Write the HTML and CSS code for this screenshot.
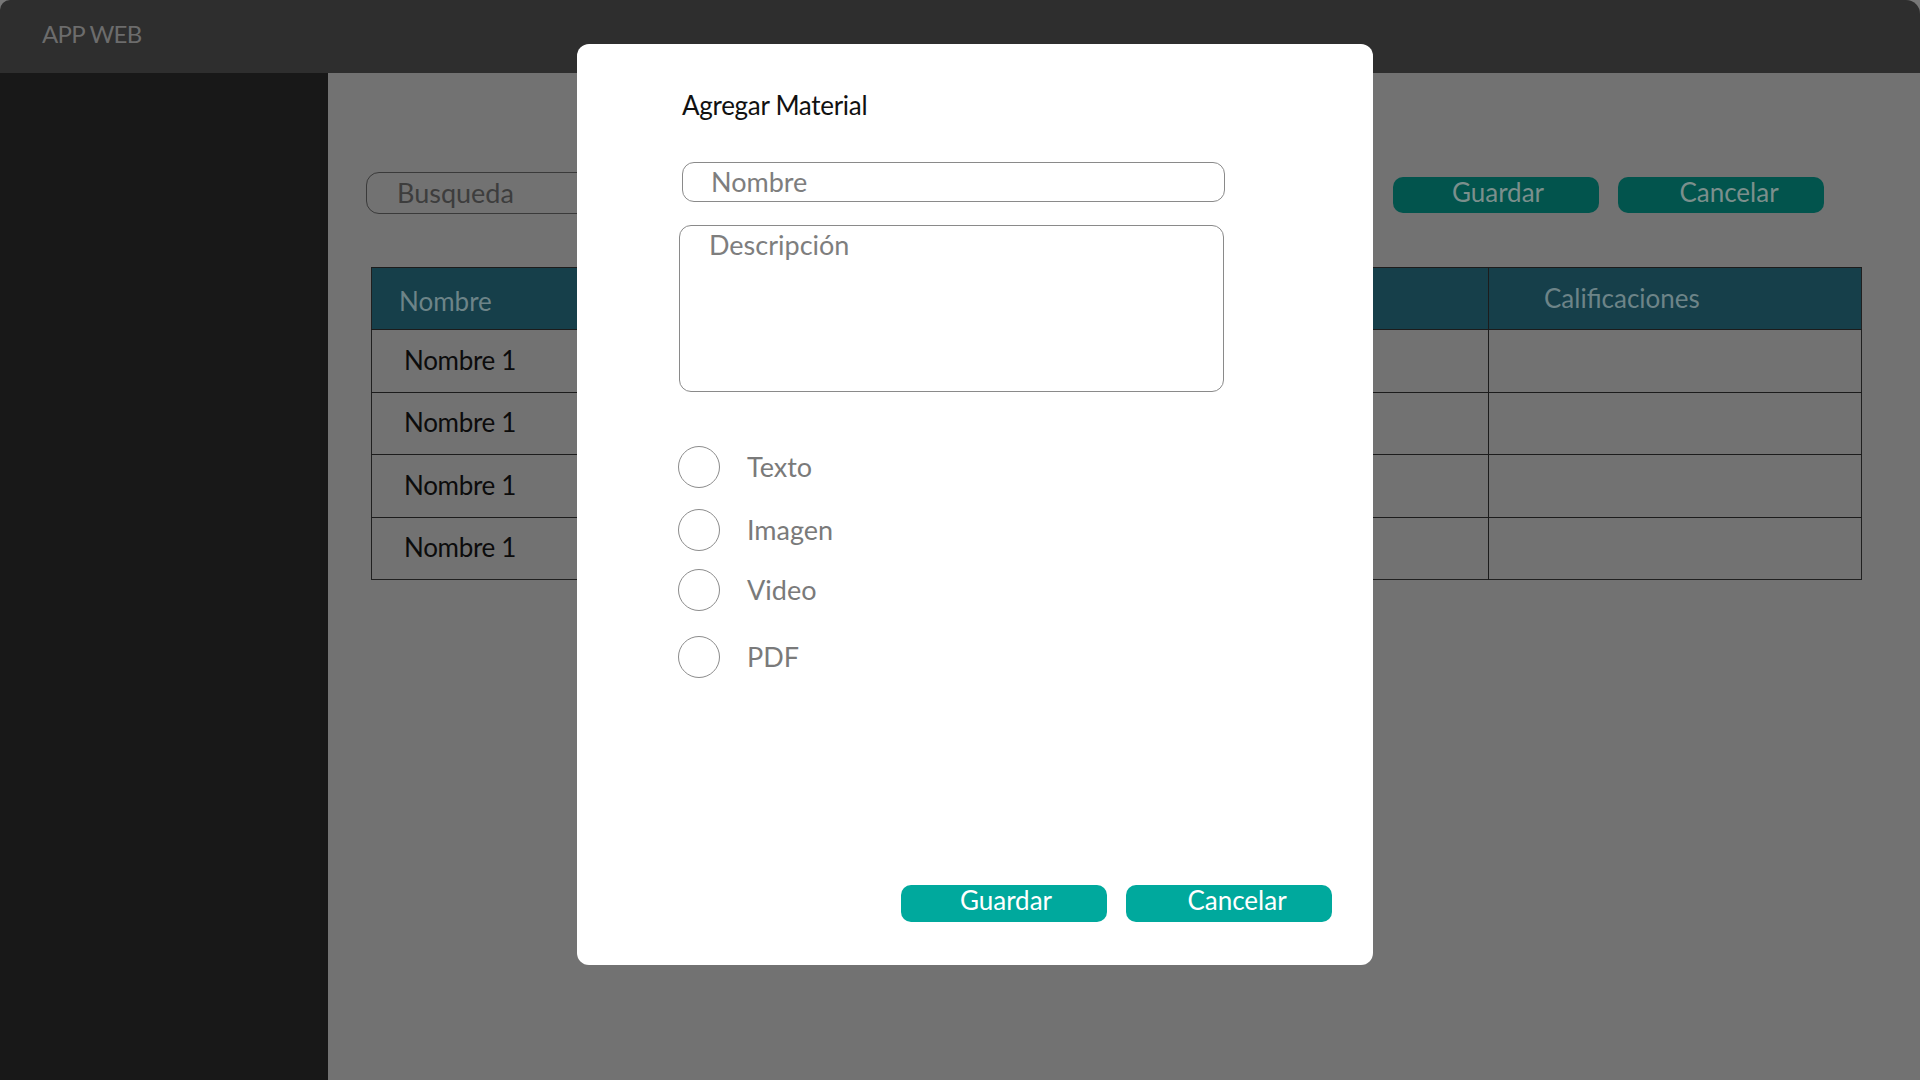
FILE: index.html
```html
<!DOCTYPE html>
<html lang="es">
<head>
<meta charset="utf-8">
<title>APP WEB</title>
<link rel="stylesheet" href="styles.css">
</head>
<body>
<div class="app">
  <header class="topbar"><span class="brand">APP WEB</span></header>
  <div class="layout">
    <aside class="sidebar"></aside>
    <main class="content">
      <div class="toolbar">
        <div class="search">Busqueda</div>
        <div class="toolbar-actions">
          <button class="btn btn-dim">Guardar</button>
          <button class="btn btn-dim btn-cancel">Cancelar</button>
        </div>
      </div>
      <table class="grid">
        <colgroup>
          <col class="c1"><col class="c2"><col class="c3"><col class="c4">
        </colgroup>
        <thead>
          <tr><th class="th-name">Nombre</th><th>Descripción</th><th>Tipo</th><th class="th-cal">Calificaciones</th></tr>
        </thead>
        <tbody>
          <tr><td class="td-name">Nombre 1</td><td></td><td></td><td></td></tr>
          <tr><td class="td-name">Nombre 1</td><td></td><td></td><td></td></tr>
          <tr><td class="td-name">Nombre 1</td><td></td><td></td><td></td></tr>
          <tr><td class="td-name">Nombre 1</td><td></td><td></td><td></td></tr>
        </tbody>
      </table>
    </main>
  </div>
</div>

<div class="overlay">
  <div class="modal">
    <h2 class="modal-title">Agregar Material</h2>
    <div class="field field-name">Nombre</div>
    <div class="field field-desc">Descripción</div>
    <div class="radios">
      <label class="radio"><span class="dot"></span><span class="radio-label">Texto</span></label>
      <label class="radio"><span class="dot"></span><span class="radio-label">Imagen</span></label>
      <label class="radio"><span class="dot"></span><span class="radio-label">Video</span></label>
      <label class="radio"><span class="dot"></span><span class="radio-label">PDF</span></label>
    </div>
    <div class="modal-actions">
      <button class="btn btn-primary">Guardar</button>
      <button class="btn btn-primary btn-cancel">Cancelar</button>
    </div>
  </div>
</div>
</body>
</html>
```
FILE: styles.css
```css
* { box-sizing: border-box; }
html, body { margin: 0; padding: 0; }
html { background: #777777; }
body {
  width: 1920px;
  height: 1080px;
  overflow: hidden;
  font-family: Lato, "Open Sans", "Liberation Sans", sans-serif;
}

.app {
  width: 1920px;
  height: 1080px;
  display: flex;
  flex-direction: column;
  border-radius: 10px 14px 0 0;
  overflow: hidden;
}

.topbar {
  height: 73px;
  flex: 0 0 73px;
  background: #2e2e2e;
  display: flex;
  align-items: center;
  padding-left: 42px;
  padding-bottom: 6px;
}
.brand {
  color: #6c6c6c;
  font-size: 24px;
  letter-spacing: -0.7px;
}

.layout {
  flex: 1;
  display: flex;
}
.sidebar {
  width: 328px;
  flex: 0 0 328px;
  background: #181818;
}
.content {
  flex: 1;
  background: #727272;
  padding: 99px 59px 0 43px;
}

.toolbar {
  display: flex;
  align-items: center;
  justify-content: space-between;
  margin-left: -5px;
  padding-right: 38px;
}
.search {
  width: 420px;
  height: 42px;
  border: 1.5px solid #3a3a3a;
  border-radius: 13px;
  color: #3d3d3d;
  font-size: 27px;
  line-height: 1;
  padding-left: 30px;
  padding-bottom: 2px;
  display: flex;
  align-items: center;
}
.toolbar-actions {
  display: flex;
  gap: 19px;
  margin-top: 4px;
}

.btn {
  width: 206px;
  height: 37px;
  border: none;
  border-radius: 10px;
  font-family: inherit;
  font-size: 26px;
  line-height: 1;
  padding: 0 0 6px 4px;
  cursor: pointer;
}
.btn-cancel { padding-left: 16px; }
.btn-dim {
  height: 36px;
  background: #02544d;
  color: #7b8f8c;
}
.btn-primary {
  background: #00a99d;
  color: #ffffff;
  padding-bottom: 8px;
}

.grid {
  margin-top: 53px;
  width: 1490px;
  border-collapse: collapse;
  table-layout: fixed;
  border: 1.5px solid #202020;
}
.c1 { width: 330px; }
.c2 { width: 400px; }
.c3 { width: 387px; }
.c4 { width: 373px; }
.grid th, .grid td {
  height: 62.5px;
  border-top: 1.5px solid #1c1c1c;
  font-weight: normal;
  font-size: 26px;
  text-align: left;
  padding: 0;
}
.grid th {
  background: #163f4a;
  color: #6d8488;
  height: 62px;
}
.grid td + td, .grid th + th { border-left: 1.5px solid #1c1c1c; }
.th-name { padding-left: 27px !important; padding-top: 4px !important; }
.th-cal { padding-left: 55px !important; padding-bottom: 2px !important; }
.td-name {
  padding-left: 32px !important;
  padding-bottom: 2px !important;
  color: #0c0c0c;
  letter-spacing: -0.3px;
}

.overlay {
  position: fixed;
  inset: 0;
}
.modal {
  position: absolute;
  left: 577px;
  top: 44px;
  width: 796px;
  height: 921px;
  background: #ffffff;
  border-radius: 12px;
  padding: 45px 41px 43px 105px;
  display: flex;
  flex-direction: column;
}
.modal-title {
  margin: 0;
  font-size: 26px;
  font-weight: normal;
  line-height: 32px;
  color: #111111;
  letter-spacing: -0.3px;
}
.field {
  border: 1px solid #8a8a8a;
  border-radius: 12px;
  color: #7e7e7e;
  font-size: 27px;
  width: 543px;
}
.field-name {
  margin-top: 41px;
  height: 40px;
  padding-left: 28px;
  padding-bottom: 2px;
  display: flex;
  align-items: center;
  line-height: 1;
}
.field-desc {
  margin-top: 23px;
  margin-left: -3px;
  width: 545px;
  height: 167px;
  padding: 3px 0 0 29px;
  line-height: 32px;
}

.radios {
  margin-top: 54px;
  margin-left: -4px;
  display: flex;
  flex-direction: column;
}
.radio {
  display: flex;
  align-items: center;
  height: 42px;
  gap: 27px;
  color: #7a7a7a;
  font-size: 27px;
}
.radio:nth-child(2) { margin-top: 21px; }
.radio:nth-child(3) { margin-top: 18px; }
.radio:nth-child(4) { margin-top: 25px; }
.dot {
  width: 42px;
  height: 42px;
  border: 1px solid #8c8c8c;
  border-radius: 50%;
  flex: 0 0 42px;
}
.radio-label { line-height: 1; padding-bottom: 2px; }

.modal-actions {
  margin-top: auto;
  display: flex;
  justify-content: flex-end;
  gap: 19px;
}
```
